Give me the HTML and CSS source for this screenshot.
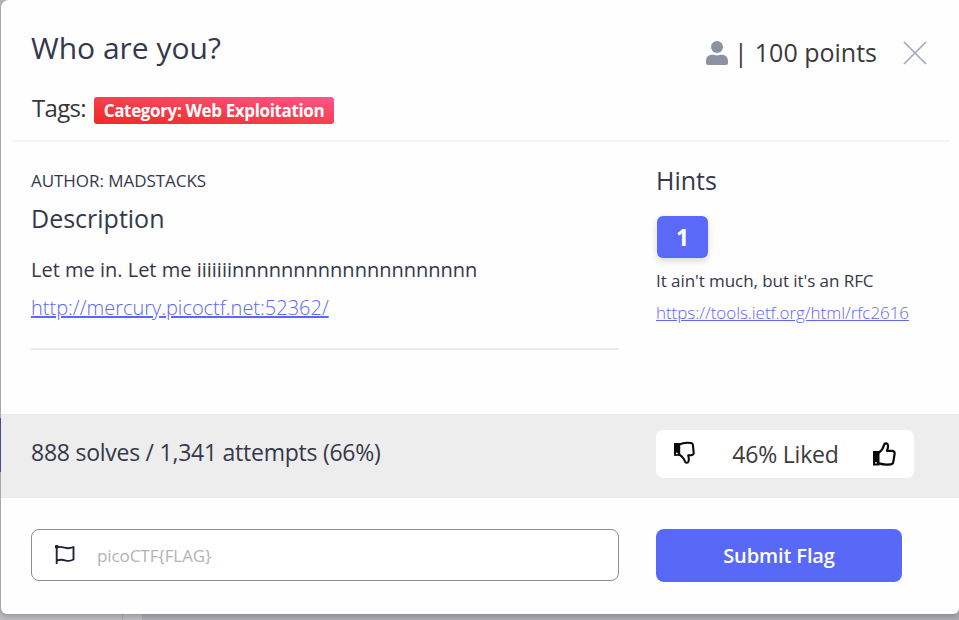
FILE: index.html
```html
<!DOCTYPE html>
<html lang="en">
<head>
<meta charset="utf-8">
<title>Who are you?</title>
<link rel="stylesheet" href="styles.css">
</head>
<body>
<div class="page">
<main class="modal">
  <header class="head">
    <div class="head-row">
      <h1 class="title"><span>Who are you?</span></h1>
      <div class="points">
        <svg class="user" viewBox="0 0 22 24"><circle cx="11" cy="6" r="6"/><path d="M0 20.5c0-4 2.3-6.700 6.300-6.700 1.500 0 2.600.7 4.700.7s3.200-.7 4.700-.7c4 0 6.300 2.700 6.300 6.700v1.300c0 1.400-.8 2.200-2.200 2.200H2.200C.8 24 0 23.200 0 21.800z"/></svg>
        <span class="bar">|</span>
        <span class="pts">100 points</span>
        <svg class="close" viewBox="0 0 24 24"><path d="M1 1l22 22M23 1L1 23"/></svg>
      </div>
    </div>
    <div class="tags"><span class="tags-label">Tags:</span><span class="tag"><span class="tag-text">Category: Web Exploitation</span></span></div>
  </header>
  <section class="body cols">
    <div class="left">
      <p class="author"><span>AUTHOR: MADSTACKS</span></p>
      <h2 class="sub desc"><span>Description</span></h2>
      <p class="text"><span>Let me in. Let me iiiiiiinnnnnnnnnnnnnnnnnnnn</span></p>
      <p class="link"><a href="#">http://mercury.picoctf.net:52362/</a></p>
    </div>
    <div class="right">
      <h2 class="sub hints"><span>Hints</span></h2>
      <button class="num">1</button>
      <p class="hint"><span>It ain't much, but it's an RFC</span></p>
      <p class="hint-link"><a href="#">https://tools.ietf.org/html/rfc2616</a></p>
    </div>
  </section>
  <section class="stats cols">
    <p class="solves"><span>888 solves / 1,341 attempts (66%)</span></p>
    <div class="likes">
      <svg class="thumb down" viewBox="0 0 22 24"><path class="fill" d="M0 1.500h6.500V15H0z"/><path d="M6 3C9 1.200 13 .9 18 1.500c1.200.2 1.700 1 1.800 2.200l.8 7.500c.2 2-.8 2.900-2.500 3l-3.200.1c.5 2 .9 4.500.3 6.500-.5 1.900-3.200 2-3.700.1-.7-3-3-5-5.500-6.900"/><circle cx="3" cy="12.500" r=".9"/></svg>
      <span class="liked">46% Liked</span>
      <svg class="thumb" viewBox="0 0 23 24"><path class="fill" d="M0 9h6.500v14.500H0z"/><path d="M6 10.500c3-2 4.200-4 5-7.500.5-2.200 3.700-2 4 .3.200 2-.4 4-1 5.500l5 .1c2 0 2.900 1.200 2.600 3l-1.300 8c-.3 1.700-1.100 2.400-2.800 2.500-4.500.4-8.500 0-11.500-1"/><circle cx="3" cy="20.800" r=".9"/></svg>
    </div>
  </section>
  <footer class="foot cols">
    <div class="field">
      <svg class="flag" viewBox="0 0 20 20"><path d="M1.700 1.500V19M1.700 2.500c3-1.400 5.300-.6 8 .2s5.300.8 8.800-.7v12.500c-3 1.700-5.600 1.700-8.500.8-3-.9-5-.9-8.300.4"/><circle cx="1.700" cy="1.700" r="1"/></svg>
      <span class="placeholder">picoCTF{FLAG}</span>
    </div>
    <button class="submit"><span>Submit Flag</span></button>
  </footer>
</main>
</div>
</body>
</html>
```
FILE: styles.css
```css
* { box-sizing: border-box; margin: 0; padding: 0; }
body {
  width: 959px; height: 620px; overflow: hidden;
  font-family: "Open Sans", sans-serif; color: #35384a;
}
.page {
  height: 620px; padding-left: 1px;
  background:
    linear-gradient(#51519b, #51519b) 0 418px / 1px 54px no-repeat,
    linear-gradient(90deg, #b9b9be 0 122px, #a5a5aa 122px 123px, #b9b9be 123px 142px, #a9a9b5 142px) 0 614px / 959px 6px no-repeat,
    #b5b5b7;
}
.modal {
  height: 614px; background: #fefefe; border-radius: 8px 0 6px 6px;
  overflow: hidden; box-shadow: 0 2px 5px rgba(0, 0, 0, .18);
}
h1, h2, p { font-weight: 400; white-space: nowrap; }
span, a { white-space: nowrap; }
.head { height: 142px; margin: 0 9px 0 11px; padding: 24px 0 0 19px; border-bottom: 2px solid #f5f5f5; }
.head-row { display: flex; justify-content: space-between; height: 70px; }
.title { font-size: 30px; line-height: 48px; }
.points { display: flex; align-items: center; height: 58px; padding-right: 23px; color: #3a3a3a; font-size: 25px; }
.user { width: 22px; height: 24px; fill: #8c92a2; }
.bar { margin: 0 7px 0 6px; }
.bar, .pts { margin-top: -2px; }
.close { width: 24px; height: 24px; margin-left: 26px; fill: none; stroke: #a2a9c0; stroke-width: 1.700; }
.tags { display: flex; align-items: center; height: 32px; color: #36363b; }
.tags-label { width: 63px; margin-top: -4px; padding-left: 1px; font-size: 24px; line-height: 32px; letter-spacing: -.7px; }
.tag {
  width: 240px; height: 27px; margin-top: 1px; border-radius: 3px;
  background: linear-gradient(to top right, #ee2a22, #f83f50 50%, #fc558c);
  color: #fff; font-size: 17px; font-weight: 700; line-height: 28px; letter-spacing: -.36px; text-align: center;
}
.cols { display: grid; grid-template-columns: 588px 1fr; column-gap: 37px; padding-left: 30px; }
.body { height: 272px; }
.left { height: 208px; padding-top: 24px; border-bottom: 2px solid #ebebeb; }
.author { font-size: 17px; line-height: 30px; letter-spacing: -.05px; }
.sub { font-size: 25px; line-height: 36px; }
.desc { margin-top: 4px; }
.text { margin-top: 18px; font-size: 20px; line-height: 32px; }
.link { margin-top: 6px; font-size: 20px; line-height: 32px; font-weight: 300; }
a { color: #5a68f6; }
.right { padding-top: 20px; }
.num {
  display: block; width: 51px; height: 42px; margin: 18px 0 0 1px; padding-bottom: 1px; border: 0; border-radius: 6px;
  background: #5a69f8; color: #fff; font: 700 23px "Open Sans", sans-serif;
  box-shadow: 0 3px 6px rgba(60, 60, 90, .2);
}
.hint { margin-top: 11px; font-size: 17px; line-height: 24px; letter-spacing: -.06px; }
.hint-link { margin-top: 8px; font-size: 17px; line-height: 24px; font-weight: 300; letter-spacing: -.05px; }
.stats { height: 84px; background: #ededed; }
.solves { font-size: 23px; line-height: 76px; letter-spacing: -.25px; }
.likes { display: flex; align-items: center; width: 258px; height: 48px; margin-top: 16px; padding: 0 18px 0 18px; border-radius: 7px; background: #fff; }
.thumb { width: 23px; height: 24px; fill: none; stroke: #080808; stroke-width: 2.200; stroke-linejoin: round; stroke-linecap: round; }
.down { width: 21px; margin-top: -2px; }
.thumb .fill { fill: #080808; stroke: none; }
.thumb circle { fill: #fff; stroke: none; }
.liked { margin: 0 auto; padding-left: 3px; margin-top: -1px; color: #3a3a3a; font-size: 23px; letter-spacing: -.2px; }
.foot { padding-top: 31px; }
.field { display: flex; align-items: center; height: 52px; padding-left: 23px; border: 1px solid #8e8e8e; border-radius: 8px; background: #fff; }
.flag { width: 20px; height: 20px; fill: none; stroke: #20243a; stroke-width: 1.900; stroke-linejoin: round; }
.placeholder { margin-left: 22px; color: #b2b2b5; font-size: 17px; letter-spacing: -.08px; }
.submit { width: 246px; height: 53px; border: 0; border-radius: 8px; background: #5969f7; color: #fff; font: 600 20px "Open Sans", sans-serif; letter-spacing: -.1px; }
```
